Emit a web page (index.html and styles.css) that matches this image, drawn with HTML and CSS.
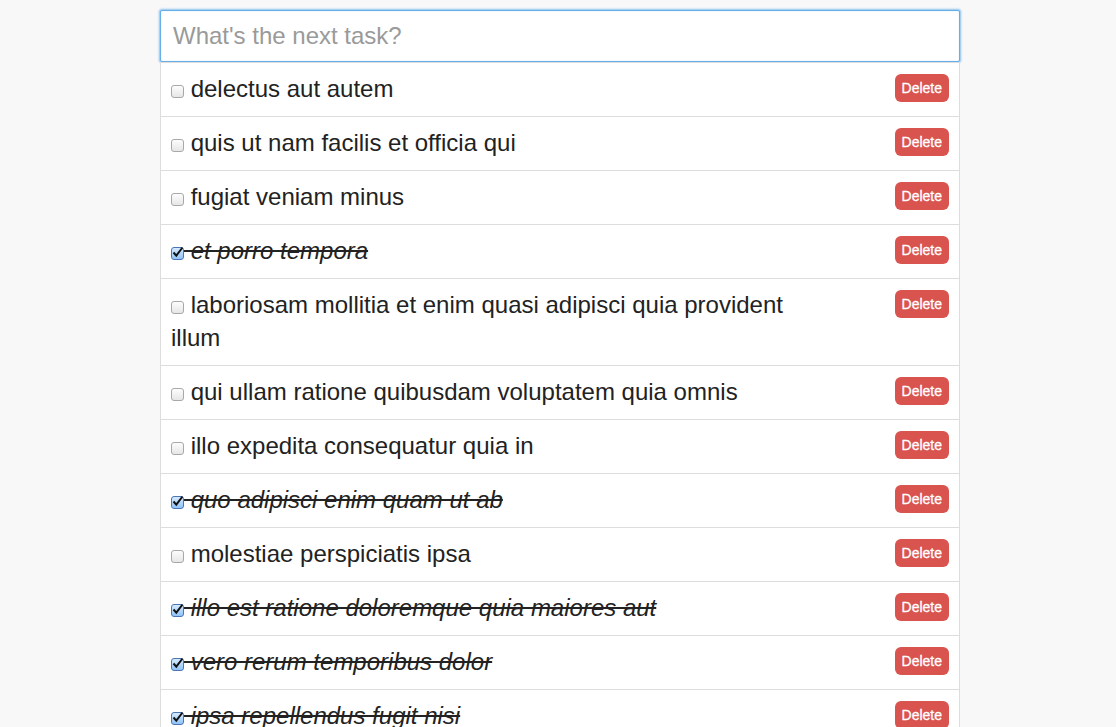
FILE: index.html
```html
<!DOCTYPE html>
<html>
<head>
<meta charset="utf-8">
<title>Todos</title>
<link rel="stylesheet" href="styles.css">
</head>
<body>
<div class="app">
  <input class="new-task" type="text" placeholder="What's the next task?">
  <ul class="tasks">
    <li class="task"><div class="label"><span class="cb"></span><span class="txt"> delectus aut autem</span></div><button class="del">Delete</button></li>
    <li class="task"><div class="label"><span class="cb"></span><span class="txt"> quis ut nam facilis et officia qui</span></div><button class="del">Delete</button></li>
    <li class="task"><div class="label"><span class="cb"></span><span class="txt"> fugiat veniam minus</span></div><button class="del">Delete</button></li>
    <li class="task done"><div class="label"><span class="cb on"><svg viewBox="0 0 13 13" width="13" height="13"><path d="M2.5 6.5 L5.3 9.6 L11.5 1.5" fill="none" stroke="#111" stroke-width="2"/></svg></span><span class="txt"> et porro tempora</span></div><button class="del">Delete</button></li>
    <li class="task"><div class="label"><span class="cb"></span><span class="txt"> laboriosam mollitia et enim quasi adipisci quia provident illum</span></div><button class="del">Delete</button></li>
    <li class="task"><div class="label"><span class="cb"></span><span class="txt"> qui ullam ratione quibusdam voluptatem quia omnis</span></div><button class="del">Delete</button></li>
    <li class="task"><div class="label"><span class="cb"></span><span class="txt"> illo expedita consequatur quia in</span></div><button class="del">Delete</button></li>
    <li class="task done"><div class="label"><span class="cb on"><svg viewBox="0 0 13 13" width="13" height="13"><path d="M2.5 6.5 L5.3 9.6 L11.5 1.5" fill="none" stroke="#111" stroke-width="2"/></svg></span><span class="txt"> quo adipisci enim quam ut ab</span></div><button class="del">Delete</button></li>
    <li class="task"><div class="label"><span class="cb"></span><span class="txt"> molestiae perspiciatis ipsa</span></div><button class="del">Delete</button></li>
    <li class="task done"><div class="label"><span class="cb on"><svg viewBox="0 0 13 13" width="13" height="13"><path d="M2.5 6.5 L5.3 9.6 L11.5 1.5" fill="none" stroke="#111" stroke-width="2"/></svg></span><span class="txt"> illo est ratione doloremque quia maiores aut</span></div><button class="del">Delete</button></li>
    <li class="task done"><div class="label"><span class="cb on"><svg viewBox="0 0 13 13" width="13" height="13"><path d="M2.5 6.5 L5.3 9.6 L11.5 1.5" fill="none" stroke="#111" stroke-width="2"/></svg></span><span class="txt"> vero rerum temporibus dolor</span></div><button class="del">Delete</button></li>
    <li class="task done"><div class="label"><span class="cb on"><svg viewBox="0 0 13 13" width="13" height="13"><path d="M2.5 6.5 L5.3 9.6 L11.5 1.5" fill="none" stroke="#111" stroke-width="2"/></svg></span><span class="txt"> ipsa repellendus fugit nisi</span></div><button class="del">Delete</button></li>
  </ul>
</div>
</body>
</html>
```

FILE: styles.css
```css
html, body {
  margin: 0;
  background: #f8f8f8;
}
body {
  padding: 10px 0 0 4px;
  font-family: "Liberation Sans", Arial, Helvetica, sans-serif;
  color: #222;
}
.app {
  width: 800px;
  margin: 0 auto;
}
.new-task {
  display: block;
  box-sizing: border-box;
  width: 800px;
  height: 52px;
  margin: 0;
  padding: 0 12px;
  font-family: "Liberation Sans", Arial, sans-serif;
  font-size: 24px;
  color: #222;
  background: #fff;
  border: 1px solid #66afe9;
  border-radius: 2px;
  outline: none;
  box-shadow: 0 0 2px 1px rgba(102, 175, 233, 0.75), inset 0 0 1px rgba(102, 175, 233, 0.6);
}
.new-task::placeholder {
  color: #9a9a9a;
}
.tasks {
  list-style: none;
  margin: 0;
  padding: 0;
}
.task {
  display: flex;
  justify-content: space-between;
  align-items: flex-start;
  background: #fff;
  border: 1px solid #ddd;
  margin-bottom: -1px;
  padding: 9px 10px 11px 10px;
  font-size: 24px;
  line-height: 33px;
}
.label {
  width: 650px;
}
.cb {
  display: inline-block;
  box-sizing: border-box;
  width: 13px;
  height: 13px;
  margin-right: 0;
  vertical-align: -1px;
  border: 1px solid #a8a8a8;
  border-radius: 3px;
  background: linear-gradient(#fdfdfd, #e6e6e6);
  position: relative;
}
.cb.on {
  border-color: #4b74b4;
  background: linear-gradient(#d6ebff, #8fc3f5);
}
.cb svg {
  position: absolute;
  left: -1px;
  top: -2px;
  overflow: visible;
}
.done .txt {
  font-style: italic;
  text-decoration: line-through;
}
.del {
  flex: none;
  margin-top: 2px;
  height: 28px;
  padding: 0 7px;
  border: none;
  border-radius: 6px;
  background: #d9534f;
  color: #fff;
  font-family: "Liberation Sans", Arial, sans-serif;
  font-size: 14px;
  line-height: 28px;
  -webkit-text-stroke: 0.3px #fff;
}
```
